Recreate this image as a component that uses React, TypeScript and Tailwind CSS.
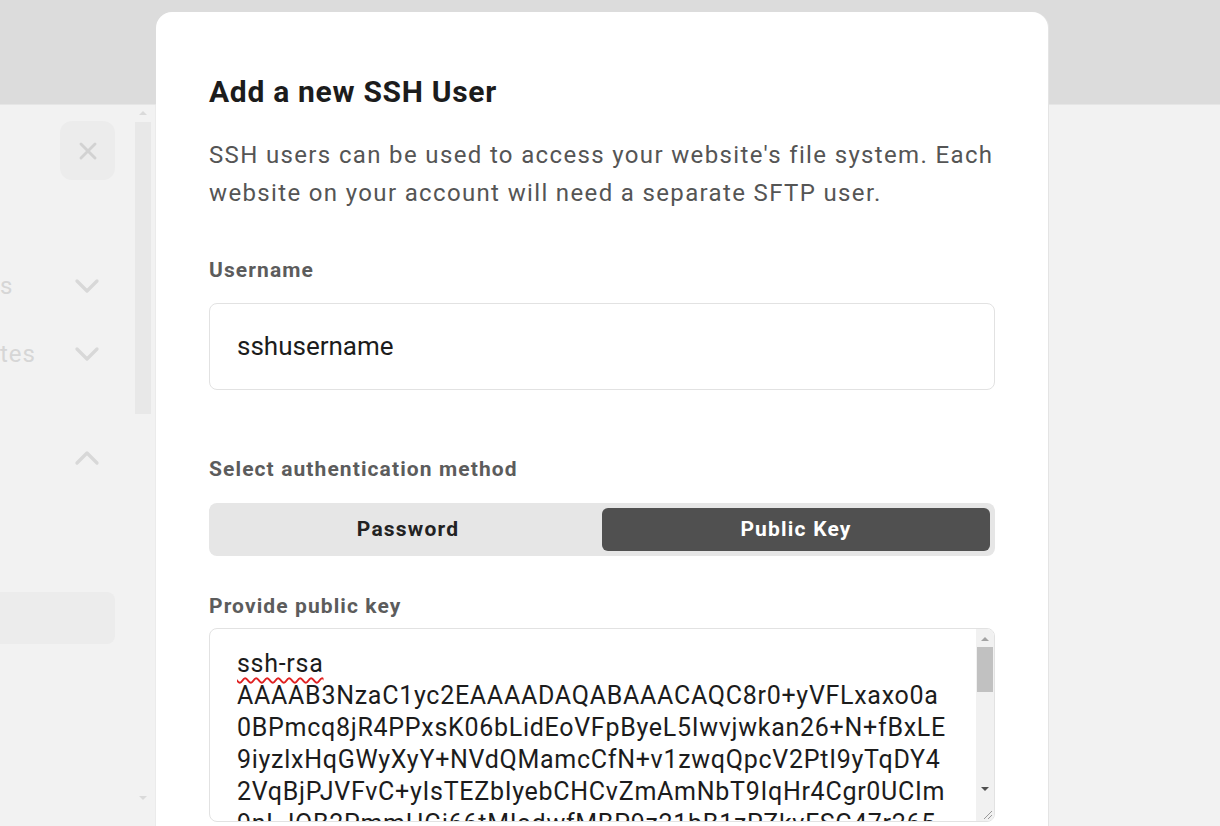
import { X, ChevronDown, ChevronUp } from "lucide-react";

const keyLines = [
  "AAAAB3NzaC1yc2EAAAADAQABAAACAQC8r0+yVFLxaxo0a",
  "0BPmcq8jR4PPxsK06bLidEoVFpByeL5Iwvjwkan26+N+fBxLE",
  "9iyzlxHqGWyXyY+NVdQMamcCfN+v1zwqQpcV2PtI9yTqDY4",
  "2VqBjPJVFvC+yIsTEZbIyebCHCvZmAmNbT9IqHr4Cgr0UCIm",
  "9nLJOB2PmmHGj66tMIadwfMBP9z21bB1zPZkvFSG47r265",
];

function Sidebar() {
  return (
    <div className="flex h-full w-[156px] shrink-0 border-r border-[#ebebeb]">
      <div className="flex w-[134px] flex-col">
        <div className="ml-[60px] mt-[16px] flex h-[59px] w-[55px] items-center justify-center rounded-xl bg-[#ececec]">
          <X className="h-[28px] w-[28px] text-[#d2d2d2]" strokeWidth={2.5} />
        </div>
        <div className="mt-[88px] flex h-[36px] items-center justify-between pr-[27px]">
          <span className="text-[24px] tracking-[1px] text-[#d6d6d6]">s</span>
          <ChevronDown className="h-[40px] w-[40px] text-[#d8d8d8]" strokeWidth={2} />
        </div>
        <div className="mt-[32px] flex h-[36px] items-center justify-between pr-[27px]">
          <span className="text-[24px] tracking-[1px] text-[#d6d6d6]">tes</span>
          <ChevronDown className="h-[40px] w-[40px] text-[#d8d8d8]" strokeWidth={2} />
        </div>
        <div className="mt-[68px] flex h-[36px] items-center justify-end pr-[27px]">
          <ChevronUp className="h-[40px] w-[40px] text-[#d8d8d8]" strokeWidth={2} />
        </div>
        <div className="mt-[116px] h-[52px] w-[115px] rounded-r-lg bg-[#ececec]" />
      </div>
      <div className="flex w-[17px] flex-col items-center pt-[6px]">
        <div className="h-0 w-0 border-x-[4px] border-b-[4px] border-x-transparent border-b-[#dadada]" />
        <div className="mt-[7px] h-[292px] w-[16px] bg-[#e8e8e8]" />
        <div className="flex-1" />
        <div className="mb-[26px] h-0 w-0 border-x-[4px] border-t-[4px] border-x-transparent border-t-[#dadada]" />
      </div>
    </div>
  );
}

function Modal() {
  return (
    <div className="absolute left-[156px] top-[12px] h-[900px] w-[892px] rounded-2xl bg-white px-[53px] pt-[62px] shadow-[1px_0_0_#e4e4e4]">
      <h1 className="text-[30px] font-bold leading-[36px] tracking-[0.7px] text-[#1c1c1c]">Add a new SSH User</h1>
      <p className="mt-[26px] text-[24px] leading-[38px] tracking-[1.35px] text-[#555]">
        SSH users can be used to access your website's file system. Each website on your account will need a separate
        SFTP user.
      </p>

      <label className="mt-[44px] block text-[21px] font-bold leading-[28px] tracking-[1.1px] text-[#5c5c5c]">
        Username
      </label>
      <div className="mt-[19px] flex h-[87px] items-center rounded-lg border border-[#e2e2e2] px-[27px] text-[26px] text-[#1c1c1c]">
        sshusername
      </div>

      <label className="mt-[65px] block text-[21px] font-bold leading-[28px] tracking-[1.1px] text-[#5c5c5c]">
        Select authentication method
      </label>
      <div className="mt-[20px] grid h-[53px] grid-cols-2 rounded-lg bg-[#e6e6e6] p-[5px]">
        <button className="rounded-md text-[21px] font-bold tracking-[1.2px] text-[#222]">Password</button>
        <button className="rounded-md bg-[#505050] text-[21px] font-bold tracking-[1.2px] text-white">Public Key</button>
      </div>

      <label className="mt-[36px] block text-[21px] font-bold leading-[28px] tracking-[1.1px] text-[#5c5c5c]">
        Provide public key
      </label>
      <div className="mt-[8px] flex h-[194px] overflow-hidden rounded-lg border border-[#e2e2e2]">
        <div className="flex-1 whitespace-pre pl-[27px] pt-[19px] text-[25px] leading-[32px] tracking-[0.72px] text-[#1c1c1c]">
          <div>
            <span className="underline decoration-[#e02020] decoration-wavy decoration-2 underline-offset-[5px]">ssh-rsa</span>
          </div>
          {keyLines.map((l) => (
            <div key={l}>{l}</div>
          ))}
        </div>
        <div className="flex w-[18px] flex-col items-center bg-[#f1f1f1]">
          <div className="mt-[8px] h-0 w-0 border-x-[4px] border-b-[4px] border-x-transparent border-b-[#a3a3a3]" />
          <div className="mt-[6px] h-[45px] w-[16px] bg-[#c1c1c1]" />
          <div className="flex-1" />
          <div className="mb-[13px] h-0 w-0 border-x-[4px] border-t-[4px] border-x-transparent border-t-[#505050]" />
          <div className="mb-[1px] flex h-[16px] w-[16px] items-end justify-end">
            <svg width="12" height="12" viewBox="0 0 12 12" className="text-[#999]">
              <path d="M11 3 L3 11 M11 7 L7 11" stroke="currentColor" strokeWidth="1" />
            </svg>
          </div>
        </div>
      </div>
    </div>
  );
}

export default function App() {
  return (
    <div className="relative h-[826px] w-full overflow-hidden bg-[#f2f2f2] font-['Roboto',sans-serif]">
      <div className="h-[105px] border-b border-[#e6e6e6] bg-[#dcdcdc]" />
      <div className="flex h-[721px]">
        <Sidebar />
        <div className="flex-1" />
      </div>
      <Modal />
    </div>
  );
}
